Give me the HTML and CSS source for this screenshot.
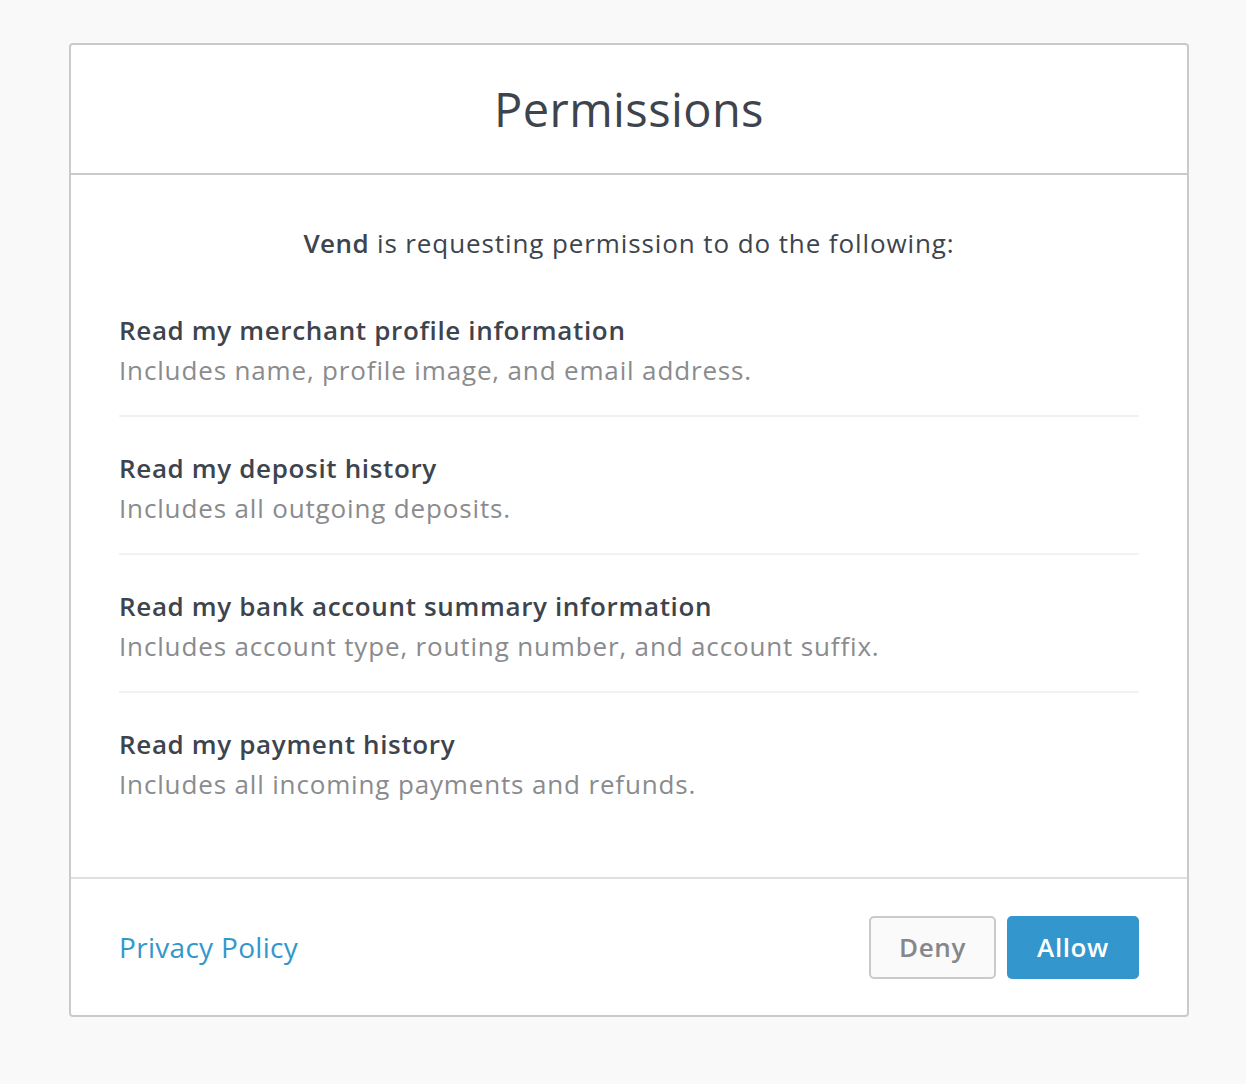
FILE: index.html
```html
<!DOCTYPE html>
<html>
<head>
<meta charset="utf-8">
<link rel="stylesheet" href="styles.css">
</head>
<body>
<div class="card">
  <div class="card-header">
    <h1 class="title">Permissions</h1>
  </div>
  <div class="card-body">
    <p class="intro"><strong>Vend</strong> is requesting permission to do the following:</p>
    <ul class="perm-list">
      <li class="perm">
        <div class="perm-title">Read my merchant profile information</div>
        <div class="perm-desc">Includes name, profile image, and email address.</div>
      </li>
      <li class="perm">
        <div class="perm-title">Read my deposit history</div>
        <div class="perm-desc">Includes all outgoing deposits.</div>
      </li>
      <li class="perm">
        <div class="perm-title">Read my bank account summary information</div>
        <div class="perm-desc">Includes account type, routing number, and account suffix.</div>
      </li>
      <li class="perm">
        <div class="perm-title">Read my payment history</div>
        <div class="perm-desc">Includes all incoming payments and refunds.</div>
      </li>
    </ul>
  </div>
  <div class="card-footer">
    <a class="privacy" href="#">Privacy Policy</a>
    <div class="actions">
      <button class="btn btn-deny">Deny</button>
      <button class="btn btn-allow">Allow</button>
    </div>
  </div>
</div>
</body>
</html>
```
FILE: styles.css
```css
html, body {
  margin: 0;
  padding: 0;
  background: #f9f9f9;
}
body {
  font-family: "Open Sans", "Lato", sans-serif;
  color: #3d444d;
}
.card {
  box-sizing: border-box;
  width: 1120px;
  margin: 43px 0 0 69px;
  background: #fff;
  border: 2px solid #c8cbce;
  border-radius: 4px;
}
.card-header {
  height: 128px;
  display: flex;
  align-items: center;
  justify-content: center;
  border-bottom: 2px solid #c8cbce;
}
.title {
  margin: 0;
  font-size: 47px;
  font-weight: 400;
  color: #3d444d;
  letter-spacing: 0.4px;
}
.card-body {
  padding: 50px 48px 48px 48px;
}
.intro {
  margin: 0;
  text-align: center;
  font-size: 26px;
  line-height: 36px;
  letter-spacing: 0.9px;
}
.intro strong {
  font-weight: 600;
  letter-spacing: 0.5px;
}
.perm-list {
  list-style: none;
  margin: 18px 0 0;
  padding: 0;
}
.perm {
  padding: 31px 0 25px;
  border-bottom: 2px solid #f2f2f2;
}
.perm:last-child {
  border-bottom: none;
}
.perm-title {
  font-size: 26px;
  line-height: 40px;
  font-weight: 600;
  color: #3d444d;
  letter-spacing: 0.65px;
}
.perm-desc {
  font-size: 26px;
  line-height: 40px;
  color: #898b8e;
  letter-spacing: 0.85px;
}
.card-footer {
  height: 136px;
  border-top: 2px solid #e0e0e0;
  display: flex;
  align-items: center;
  justify-content: space-between;
  padding: 0 48px 0 48px;
}
.privacy {
  font-size: 28px;
  color: #3397cc;
  text-decoration: none;
  letter-spacing: 0.3px;
}
.actions {
  display: flex;
  gap: 11px;
}
.btn {
  height: 63px;
  font-family: inherit;
  font-size: 26px;
  font-weight: 600;
  border-radius: 5px;
  cursor: pointer;
  letter-spacing: 0.6px;
  padding: 0;
}
.btn-deny {
  width: 127px;
  background: #fafafa;
  border: 2px solid #c8cbce;
  color: #85878a;
}
.btn-allow {
  width: 132px;
  background: #3396cc;
  border: none;
  color: #fff;
}
```
